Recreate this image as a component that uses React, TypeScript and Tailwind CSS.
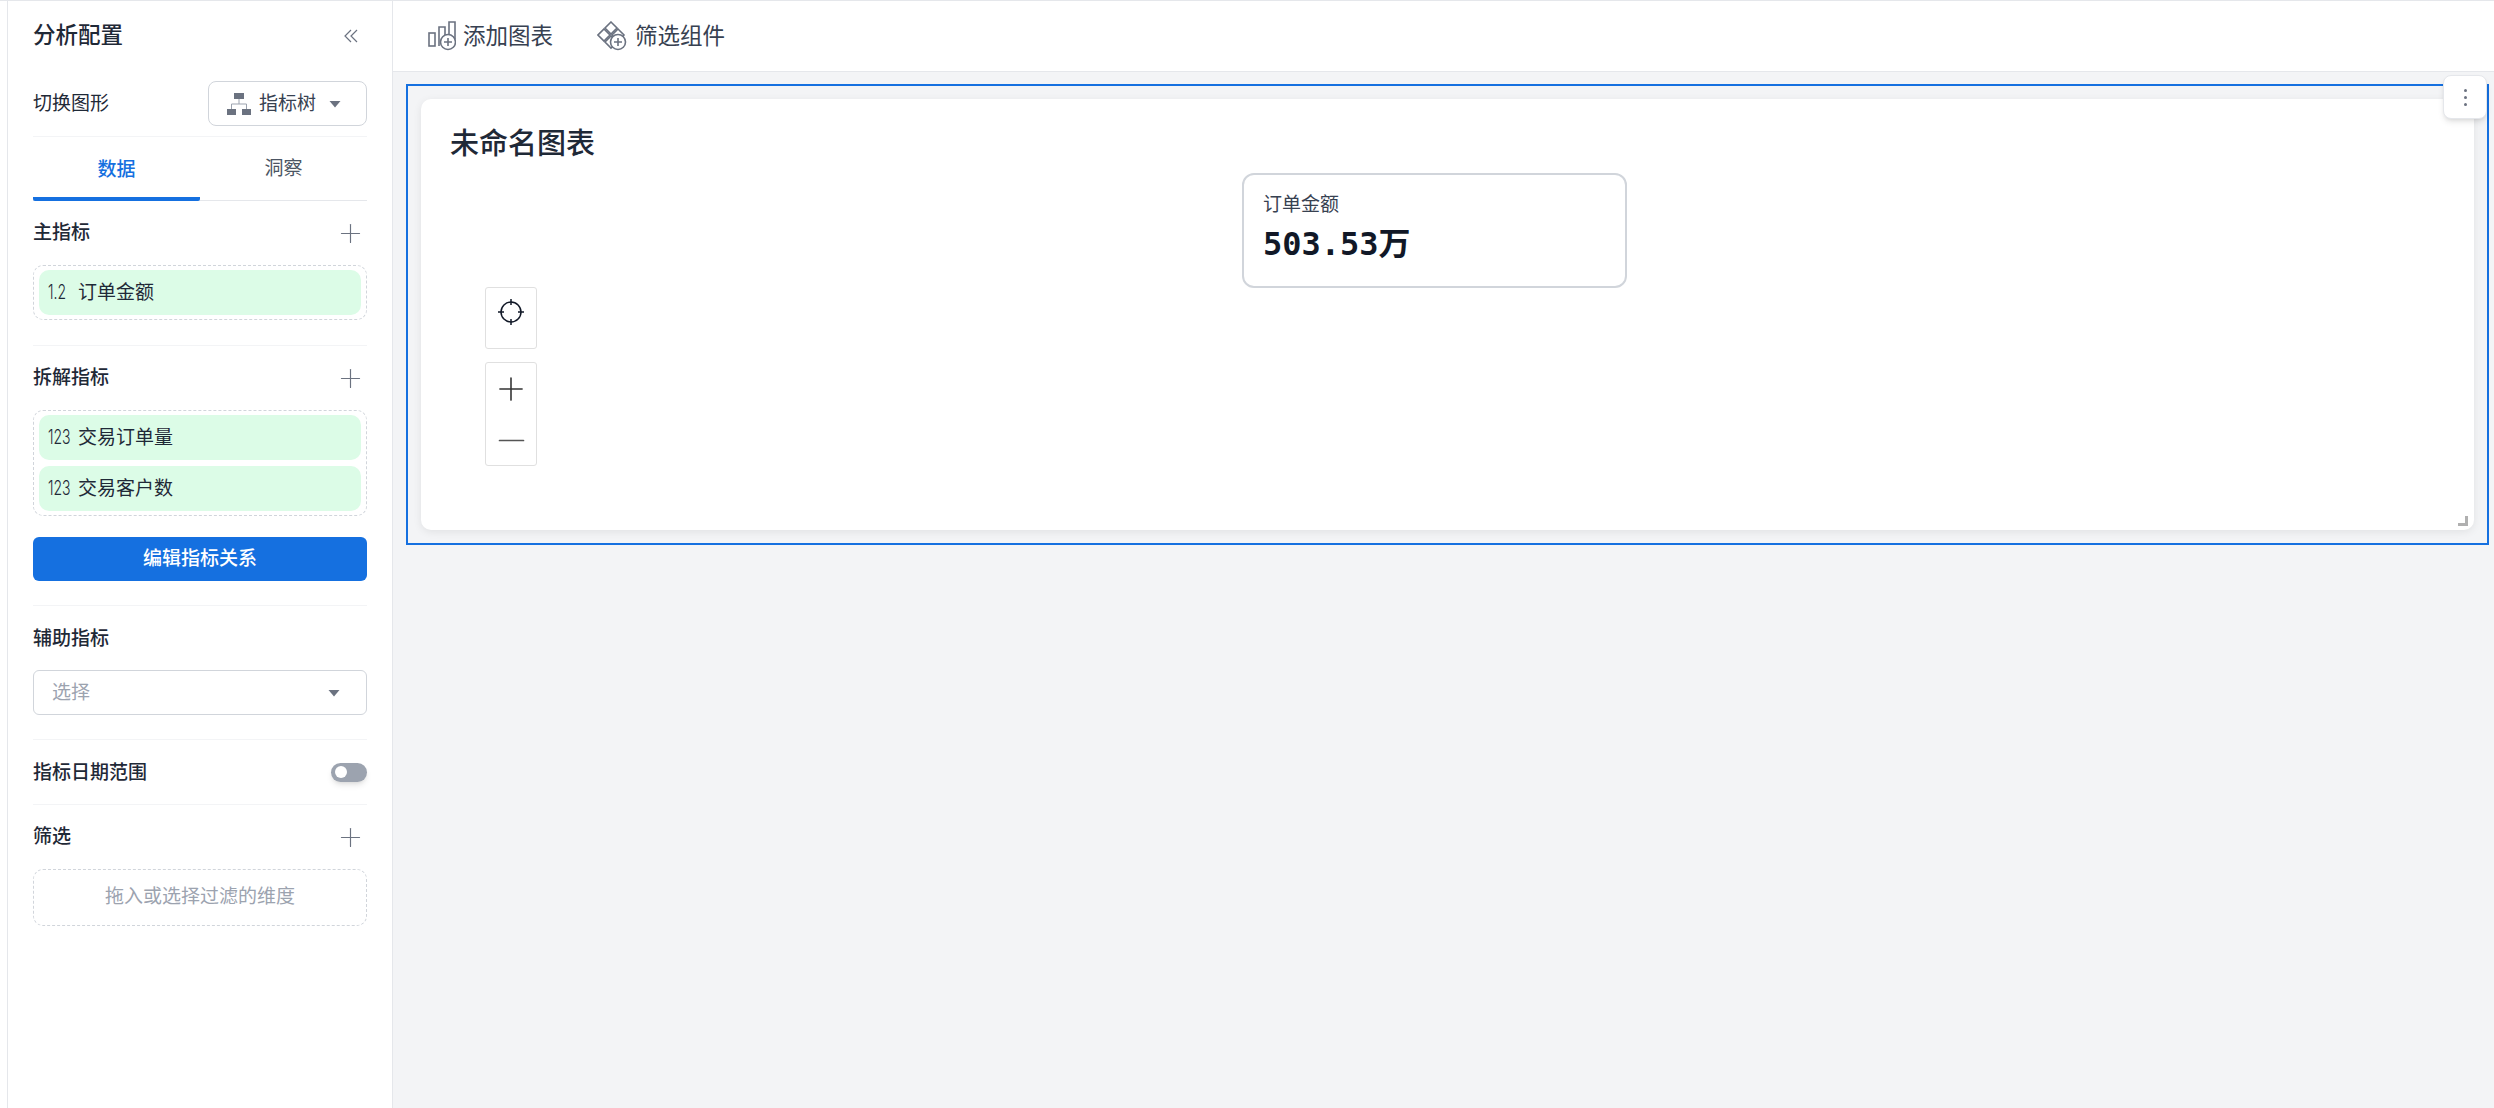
import { Plus, Minus } from 'lucide-react'

const font = { fontFamily: 'Inter, "Noto Sans CJK SC", sans-serif' }

function Caret({ className }: { className?: string }) {
    return (
        <svg width="12" height="8" viewBox="0 0 12 8" className={className}>
            <path d="M0.500 1h11L6 7.500z" fill="#6b7280" />
        </svg>
    )
}

function SectionHead({ title }: { title: string }) {
    return (
        <div className="flex h-[20px] items-center justify-between">
            <span className="text-[19px] leading-[20px] font-medium text-[#1f2937]">{title}</span>
            <Plus size={31} strokeWidth={0.9} className="mr-[1px] shrink-0 text-[#6b7280]" />
        </div>
    )
}

function Chip({ tag, label }: { tag: string; label: string }) {
    return (
        <div className="flex h-[45px] items-center rounded-[10px] bg-[#dcfce7] pl-[9px]">
            <span className="w-[30px] shrink-0">
                <span className="inline-block origin-left scale-x-[0.7] text-[20px] leading-none font-light text-[#1f2937]">{tag}</span>
            </span>
            <span className="text-[19px] leading-none text-[#1f2937]">{label}</span>
        </div>
    )
}

function TreeIcon() {
    return (
        <svg width="24" height="22" viewBox="0 0 24 22" className="shrink-0">
            <rect x="7" y="0" width="10" height="6" fill="#6b7280" />
            <rect x="0" y="16" width="9" height="6" fill="#6b7280" />
            <rect x="15" y="16" width="9" height="6" fill="#6b7280" />
            <path d="M12 6v5M4.500 16v-5h15v5" fill="none" stroke="#9ca3af" strokeWidth="1" />
        </svg>
    )
}

function ChartAddIcon() {
    return (
        <svg width="28" height="30" viewBox="0 0 28 30" fill="none" stroke="#6b7280" strokeWidth="1.6" className="shrink-0">
            <rect x="1" y="12" width="6" height="13" />
            <path d="M11 25V6h6v10" />
            <path d="M21 13V1h6v17" />
            <circle cx="20" cy="21" r="7.500" fill="#fff" />
            <path d="M16 21h8M20 17v8" />
        </svg>
    )
}

function FilterAddIcon() {
    return (
        <svg width="30" height="30" viewBox="0 0 30 30" fill="none" stroke="#6b7280" strokeWidth="1.6" className="shrink-0">
            <path d="M14 1l6 6-6 6-6-6z" />
            <path d="M7 8l6 6-6 6-6-6z" />
            <path d="M21 8l6 6-6 6-6-6z" />
            <path d="M14 15l6 6-6 6-6-6z" />
            <circle cx="21" cy="21" r="7.500" fill="#fff" />
            <path d="M17 21h8M21 17v8" />
        </svg>
    )
}

function LocateIcon() {
    return (
        <svg width="28" height="28" viewBox="0 0 28 28" fill="none" stroke="#111827" strokeWidth="1.5">
            <circle cx="14" cy="14" r="10" />
            <path d="M14 1v6M14 21v6M1 14h6M21 14h6" />
        </svg>
    )
}

export default function App() {
    return (
        <div className="flex h-[1108px] w-[2494px] overflow-hidden border-t border-[#e5e7eb] bg-white" style={font}>
            <div className="w-[7px] shrink-0 bg-white"></div>
            <aside className="flex w-[386px] shrink-0 flex-col border-x border-[#e5e7eb] bg-white px-[25px]">
                <div className="flex h-[80px] shrink-0 items-center justify-between pb-[11px]">
                    <h1 className="text-[22.500px] leading-none font-medium text-[#1f2937]">分析配置</h1>
                    <svg width="14" height="14" viewBox="0 0 14 14" fill="none" stroke="#6b7280" strokeWidth="1.2" className="mr-[9px]">
                        <path d="M7 1L1 7l6 6M13 1L7 7l6 6" />
                    </svg>
                </div>
                <div className="flex items-center justify-between border-b border-[#f3f4f6] pb-[10px]">
                    <span className="pt-[2px] text-[19px] text-[#1f2937]">切换图形</span>
                    <button className="flex h-[45px] w-[159px] items-center rounded-[8px] border border-[#d1d5db] pl-[18px]">
                        <TreeIcon />
                        <span className="ml-[8px] text-[19px] leading-none text-[#374151]">指标树</span>
                        <Caret className="ml-[13px]" />
                    </button>
                </div>
                <div className="flex h-[64px] border-b border-[#e5e7eb]">
                    <div className="mb-[-1px] flex w-1/2 items-center justify-center rounded-[2px] border-b-4 border-[#1570e0] pt-[6px] text-[19px] font-medium text-[#1570e0]">数据</div>
                    <div className="flex w-1/2 items-center justify-center pt-[2px] text-[19px] text-[#4b5563]">洞察</div>
                </div>
                <div className="flex flex-col border-b border-[#f3f4f6] pt-[22px] pb-[25px]">
                    <SectionHead title="主指标" />
                    <div className="mt-[22px] rounded-[10px] border border-dashed border-[#d1d5db] px-[5px] py-[4px]">
                        <Chip tag="1.2" label="订单金额" />
                    </div>
                </div>
                <div className="flex flex-col border-b border-[#f3f4f6] pt-[22px] pb-[24px]">
                    <SectionHead title="拆解指标" />
                    <div className="mt-[22px] flex flex-col gap-[6px] rounded-[10px] border border-dashed border-[#d1d5db] px-[5px] py-[4px]">
                        <Chip tag="123" label="交易订单量" />
                        <Chip tag="123" label="交易客户数" />
                    </div>
                    <button className="mt-[21px] flex h-[44px] items-center justify-center rounded-[6px] bg-[#1570e0] text-[19px] font-medium text-white">编辑指标关系</button>
                </div>
                <div className="flex flex-col border-b border-[#f3f4f6] pt-[23px] pb-[24px]">
                    <span className="text-[19px] leading-[20px] font-medium text-[#1f2937]">辅助指标</span>
                    <div className="mt-[21px] flex h-[45px] items-center justify-between rounded-[6px] border border-[#d1d5db] pr-[26px] pl-[18px]">
                        <span className="text-[19px] leading-none text-[#9ca3af]">选择</span>
                        <Caret />
                    </div>
                </div>
                <div className="flex h-[65px] items-center justify-between border-b border-[#f3f4f6]">
                    <span className="text-[19px] leading-none font-medium text-[#1f2937]">指标日期范围</span>
                    <div className="flex h-[19px] w-[36px] items-center rounded-full bg-[#9ca3af] pl-[4px] shadow-md">
                        <div className="h-[12px] w-[12px] rounded-full bg-white"></div>
                    </div>
                </div>
                <div className="flex flex-col pt-[22px]">
                    <SectionHead title="筛选" />
                    <div className="mt-[22px] flex h-[57px] items-center justify-center rounded-[10px] border border-dashed border-[#d1d5db] text-[19px] text-[#9ca3af]">拖入或选择过滤的维度</div>
                </div>
            </aside>
            <main className="flex min-w-0 flex-1 flex-col bg-[#f3f4f6]">
                <div className="flex h-[71px] shrink-0 items-center gap-[44px] border-b border-[#e5e7eb] bg-white pl-[35px]">
                    <div className="flex items-center gap-[7px]">
                        <ChartAddIcon />
                        <span className="text-[22.500px] leading-none text-[#374151]">添加图表</span>
                    </div>
                    <div className="flex items-center gap-[8px]">
                        <FilterAddIcon />
                        <span className="text-[22.500px] leading-none text-[#374151]">筛选组件</span>
                    </div>
                </div>
                <div className="relative pt-[12px] pr-[5px] pl-[13px]">
                    <div className="h-[461px] border-2 border-[#1570e0] px-[13px] py-[13px]">
                        <div className="relative h-full rounded-[10px] bg-white px-[29px] pt-[27px] shadow-[0_2px_8px_rgba(0,0,0,0.08)]">
                            <h2 className="text-[29px] leading-[36px] font-medium text-[#1f2937]">未命名图表</h2>
                            <div className="absolute top-[74px] left-[821px] flex h-[115px] w-[385px] flex-col rounded-[12px] border-2 border-[#d1d5db] bg-white pt-[16px] pl-[19px]">
                                <span className="text-[19px] leading-[28px] text-[#374151]">订单金额</span>
                                <span className="mt-[5px] text-[32px] leading-[40px] font-bold text-[#111827]" style={{ fontFamily: '"DejaVu Sans Mono", "Noto Sans CJK SC", monospace' }}>503.53万</span>
                            </div>
                            <div className="absolute top-[188px] left-[64px] flex h-[62px] w-[52px] items-start justify-center rounded-[3px] border border-[#e0e0e0] bg-white pt-[10px]">
                                <LocateIcon />
                            </div>
                            <div className="absolute top-[263px] left-[64px] flex h-[104px] w-[52px] flex-col items-center rounded-[3px] border border-[#e0e0e0] bg-white pt-[7px]">
                                <Plus size={38} strokeWidth={1} className="shrink-0 text-[#333333]" />
                                <Minus size={41} strokeWidth={1} className="mt-[12px] shrink-0 text-[#555555]" />
                            </div>
                            <div className="absolute right-[6px] bottom-[4px] h-[10px] w-[10px] border-r-[3px] border-b-[3px] border-[#b0b0b0]"></div>
                        </div>
                    </div>
                    <button className="absolute top-[3px] right-[7px] flex h-[44px] w-[44px] flex-col items-center justify-center gap-[4px] rounded-[8px] border border-[#e5e7eb] bg-white shadow-md">
                        <span className="h-[3px] w-[3px] rounded-full bg-[#6b7280]"></span>
                        <span className="h-[3px] w-[3px] rounded-full bg-[#6b7280]"></span>
                        <span className="h-[3px] w-[3px] rounded-full bg-[#6b7280]"></span>
                    </button>
                </div>
            </main>
        </div>
    )
}
